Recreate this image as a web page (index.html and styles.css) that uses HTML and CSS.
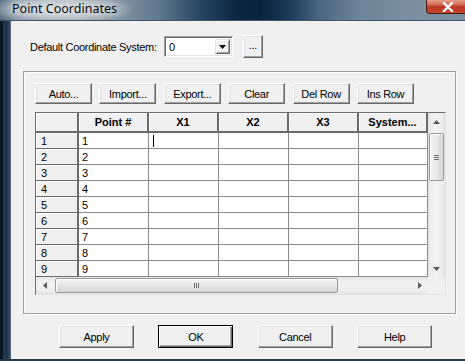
FILE: index.html
```html
<!DOCTYPE html>
<html>
<head>
<meta charset="utf-8">
<link rel="stylesheet" href="styles.css">
</head>
<body>
<div class="window">
  <div class="titlebar">
    <span class="title">Point Coordinates</span>
    <div class="close"><svg width="14" height="10" viewBox="0 0 14 10"><path d="M3 1 L11 9 M11 1 L3 9" stroke="#fff" stroke-width="2.4" stroke-linecap="square"/></svg></div>
  </div>
  <div class="body">
    <div class="frame-left"></div>
    <div class="client">
      <div class="top-row">
        <span class="label">Default Coordinate System:</span>
        <div class="combo">
          <span class="combo-val">0</span>
          <span class="combo-btn"><svg width="7" height="4" viewBox="0 0 7 4"><path d="M0 0 H7 L3.5 4 Z" fill="#000"/></svg></span>
        </div>
        <button class="btn btn-dots">...</button>
      </div>
      <div class="group">
        <div class="toolbar">
          <button class="btn tb">Auto...</button>
          <button class="btn tb">Import...</button>
          <button class="btn tb">Export...</button>
          <button class="btn tb">Clear</button>
          <button class="btn tb">Del Row</button>
          <button class="btn tb">Ins Row</button>
        </div>
        <div class="grid">
          <div class="grid-main">
            <div class="cells">
              <div class="hc"></div><div class="hc">Point #</div><div class="hc">X1</div><div class="hc">X2</div><div class="hc">X3</div><div class="hc">System...</div>
              <div class="rh">1</div><div class="dc">1</div><div class="dc"><span class="caret"></span></div><div class="dc"></div><div class="dc"></div><div class="dc"></div>
              <div class="rh">2</div><div class="dc">2</div><div class="dc"></div><div class="dc"></div><div class="dc"></div><div class="dc"></div>
              <div class="rh">3</div><div class="dc">3</div><div class="dc"></div><div class="dc"></div><div class="dc"></div><div class="dc"></div>
              <div class="rh">4</div><div class="dc">4</div><div class="dc"></div><div class="dc"></div><div class="dc"></div><div class="dc"></div>
              <div class="rh">5</div><div class="dc">5</div><div class="dc"></div><div class="dc"></div><div class="dc"></div><div class="dc"></div>
              <div class="rh">6</div><div class="dc">6</div><div class="dc"></div><div class="dc"></div><div class="dc"></div><div class="dc"></div>
              <div class="rh">7</div><div class="dc">7</div><div class="dc"></div><div class="dc"></div><div class="dc"></div><div class="dc"></div>
              <div class="rh">8</div><div class="dc">8</div><div class="dc"></div><div class="dc"></div><div class="dc"></div><div class="dc"></div>
              <div class="rh">9</div><div class="dc">9</div><div class="dc"></div><div class="dc"></div><div class="dc"></div><div class="dc"></div>
            </div>
            <div class="vscroll">
              <div class="arrow"><svg width="7" height="4" viewBox="0 0 7 4"><path d="M0 4 H7 L3.5 0 Z" fill="#5a5a5a"/></svg></div>
              <div class="vtrack">
                <div class="vthumb"><span class="grip-v"></span></div>
              </div>
              <div class="arrow"><svg width="7" height="4" viewBox="0 0 7 4"><path d="M0 0 H7 L3.5 4 Z" fill="#5a5a5a"/></svg></div>
            </div>
          </div>
          <div class="hbar">
            <div class="hscroll">
              <div class="harrow"><svg width="4" height="7" viewBox="0 0 4 7"><path d="M4 0 V7 L0 3.5 Z" fill="#5a5a5a"/></svg></div>
              <div class="htrack">
                <div class="hthumb"><span class="grip-h"></span></div>
              </div>
              <div class="harrow"><svg width="4" height="7" viewBox="0 0 4 7"><path d="M0 0 V7 L4 3.5 Z" fill="#5a5a5a"/></svg></div>
            </div>
            <div class="corner"></div>
          </div>
        </div>
      </div>
      <div class="actions">
        <button class="btn act">Apply</button>
        <button class="btn act default">OK</button>
        <button class="btn act">Cancel</button>
        <button class="btn act">Help</button>
      </div>
    </div>
  </div>
  <div class="frame-bottom"></div>
</div>
</body>
</html>
```

FILE: styles.css
```css
html, body {
  margin: 0;
  padding: 0;
  width: 465px;
  height: 361px;
  overflow: hidden;
  background: #0f1b28;
}

.window {
  width: 465px;
  height: 361px;
  display: flex;
  flex-direction: column;
  font-family: "Liberation Sans", Arial, sans-serif;
  font-size: 11px;
  letter-spacing: -0.3px;
  color: #000;
}

.titlebar {
  height: 21px;
  flex: none;
  display: flex;
  align-items: flex-start;
  background:
    radial-gradient(ellipse 75px 16px at 60px 9px, rgba(225,230,234,0.95) 0%, rgba(205,212,218,0.75) 55%, rgba(170,182,192,0) 100%),
    linear-gradient(90deg, #52677b 0px, #7f909f 20px, #8b9aa7 110px, #5f768b 160px, #2a4663 200px, #0d2641 235px, #0b223b 260px, #1c3a58 290px, #4d6782 320px, #6f8498 360px, #7d90a2 420px, #7a8c9e 465px);
  border-bottom: 1px solid #41566b;
  box-sizing: border-box;
}

.title {
  font-family: "Noto Sans", "Open Sans", sans-serif;
  font-size: 12.5px;
  letter-spacing: 0;
  color: #0a0a0a;
  margin-left: 12px;
  margin-top: 0px;
  line-height: 17px;
  text-shadow: 0 0 6px rgba(255,255,255,0.9);
}

.close {
  margin-left: auto;
  width: 39px;
  height: 14px;
  box-sizing: border-box;
  border: 1px solid #4a1a14;
  border-top: none;
  border-right: none;
  border-radius: 0 0 0 4px;
  background: linear-gradient(180deg, #e6a08f 0%, #d26a55 35%, #b8351f 55%, #c9462e 100%);
  display: flex;
  align-items: center;
  justify-content: center;
  padding-left: 3px;
}

.body {
  flex: 1;
  display: flex;
  min-height: 0;
}

.frame-left {
  width: 11px;
  flex: none;
  background: linear-gradient(90deg, #0b1520 0 3px, #1b3653 3px 8px, #2c4258 8px 10px, #5a6775 10px 11px);
}

.client {
  flex: 1;
  background: #f0f0f0;
  display: flex;
  flex-direction: column;
}

.frame-bottom {
  height: 2px;
  flex: none;
  background: #2a3a4a;
}

/* top row */
.top-row {
  margin-top: 14px;
  margin-left: 19px;
  height: 23px;
  display: flex;
  align-items: center;
}

.label {
  width: 134px;
  flex: none;
  white-space: nowrap;
}

.combo {
  width: 69px;
  height: 21px;
  box-sizing: border-box;
  background: #fff;
  border: 1px solid;
  border-color: #a0a0a0 #fff #fff #a0a0a0;
  box-shadow: inset 1px 1px 0 #696969, inset -1px -1px 0 #e3e3e3;
  display: flex;
  align-items: center;
  padding: 2px;
}

.combo-val {
  flex: 1;
  padding-left: 2px;
}

.combo-btn {
  width: 15px;
  height: 15px;
  box-sizing: border-box;
  background: #f0f0f0;
  border: 1px solid;
  border-color: #e3e3e3 #696969 #696969 #e3e3e3;
  box-shadow: inset 1px 1px 0 #fff, inset -1px -1px 0 #a0a0a0;
  display: flex;
  align-items: center;
  justify-content: center;
}

.btn {
  font-family: "Liberation Sans", Arial, sans-serif;
  font-size: 11px;
  letter-spacing: -0.3px;
  color: #000;
  background: #f0f0f0;
  box-sizing: border-box;
  border: 1px solid;
  border-color: #fff #696969 #696969 #fff;
  box-shadow: inset -1px -1px 0 #a0a0a0, inset 1px 1px 0 #e3e3e3;
  padding: 0;
  margin: 0;
  cursor: default;
}

.btn-dots {
  width: 20px;
  height: 23px;
  margin-left: 10px;
  padding-bottom: 4px;
}

/* group box */
.group {
  margin-top: 13px;
  margin-left: 12px;
  width: 433px;
  height: 243px;
  box-sizing: border-box;
  border: 1px solid #a0a0a0;
  box-shadow: inset 1px 1px 0 #fff, 1px 1px 0 #fff;
  padding: 11px 0 0 11px;
}

.toolbar {
  display: flex;
  gap: 7.4px;
}

.tb {
  width: 57px;
  height: 21px;
}

.grid {
  margin-top: 8px;
  width: 411px;
  height: 183px;
  box-sizing: border-box;
  border: 1px solid;
  border-color: #6d6d6d #e3e3e3 #e3e3e3 #6d6d6d;
  display: flex;
  flex-direction: column;
  background: #fff;
}

.grid-main {
  display: flex;
  height: 164px;
}

.cells {
  width: 392px;
  flex: none;
  display: grid;
  grid-template-columns: 43px 70px 70px 70px 70px 69px;
  grid-template-rows: 20px repeat(9, 16px);
  overflow: hidden;
}

.hc {
  background: #f0f0f0;
  box-sizing: border-box;
  border-right: 2px solid #6a6a6a;
  border-bottom: 2px solid #6a6a6a;
  box-shadow: inset 1px 1px 0 #fff;
  font-weight: bold;
  letter-spacing: 0;
  display: flex;
  align-items: center;
  justify-content: center;
  white-space: nowrap;
  overflow: hidden;
}

.rh {
  background: #f0f0f0;
  box-sizing: border-box;
  border-right: 2px solid #6a6a6a;
  border-bottom: 1px solid #6a6a6a;
  box-shadow: inset 1px 1px 0 #fff;
  padding-left: 5px;
  display: flex;
  align-items: center;
}

.dc {
  background: #fff;
  box-sizing: border-box;
  border-right: 1px solid #8c8c8c;
  border-bottom: 1px solid #8c8c8c;
  padding-left: 3px;
  display: flex;
  align-items: center;
}

.caret {
  display: block;
  width: 1px;
  height: 12px;
  background: #000;
  margin-left: 1px;
}

/* scrollbars */
.vscroll {
  width: 17px;
  flex: none;
  display: flex;
  flex-direction: column;
  background: linear-gradient(90deg, #e3e3e3 0, #eeeeee 3px, #f2f2f2 8px, #eeeeee 14px, #e3e3e3 17px);
}

.arrow {
  height: 17px;
  flex: none;
  display: flex;
  align-items: center;
  justify-content: center;
}

.vtrack {
  flex: 1;
  padding-top: 3px;
}

.vthumb {
  margin: 0 1px;
  height: 48px;
  box-sizing: border-box;
  border: 1px solid #9a9a9a;
  border-radius: 2px;
  background: linear-gradient(90deg, #f4f4f4 0%, #e8e8e8 50%, #d6d6d6 100%);
  box-shadow: inset 1px 1px 0 #fff;
  display: flex;
  align-items: center;
  justify-content: center;
}

.grip-v {
  width: 5px;
  height: 5px;
  background: repeating-linear-gradient(180deg, #6f6f6f 0 1px, transparent 1px 2px);
}

.hbar {
  display: flex;
  height: 17px;
}

.hscroll {
  width: 392px;
  flex: none;
  display: flex;
  background: linear-gradient(180deg, #e3e3e3 0, #eeeeee 3px, #f2f2f2 8px, #eeeeee 14px, #e3e3e3 17px);
}

.harrow {
  width: 17px;
  flex: none;
  display: flex;
  align-items: center;
  justify-content: center;
}

.htrack {
  flex: 1;
  padding-left: 2px;
  display: flex;
  align-items: center;
}

.hthumb {
  width: 283px;
  height: 15px;
  box-sizing: border-box;
  border: 1px solid #9a9a9a;
  border-radius: 2px;
  background: linear-gradient(180deg, #f4f4f4 0%, #e8e8e8 50%, #d2d2d2 100%);
  box-shadow: inset 1px 1px 0 #fff;
  display: flex;
  align-items: center;
  justify-content: center;
}

.grip-h {
  width: 5px;
  height: 5px;
  background: repeating-linear-gradient(90deg, #6f6f6f 0 1px, transparent 1px 2px);
}

.corner {
  width: 17px;
  background: #f0f0f0;
}

/* bottom actions */
.actions {
  margin-top: 11px;
  margin-left: 48px;
  display: flex;
  gap: 24.4px;
}

.act {
  width: 75px;
  height: 23px;
}

.act.default {
  border: 1px solid #000;
  box-shadow: inset 1px 1px 0 #fff, inset -1px -1px 0 #696969, inset -2px -2px 0 #a0a0a0;
}
```
